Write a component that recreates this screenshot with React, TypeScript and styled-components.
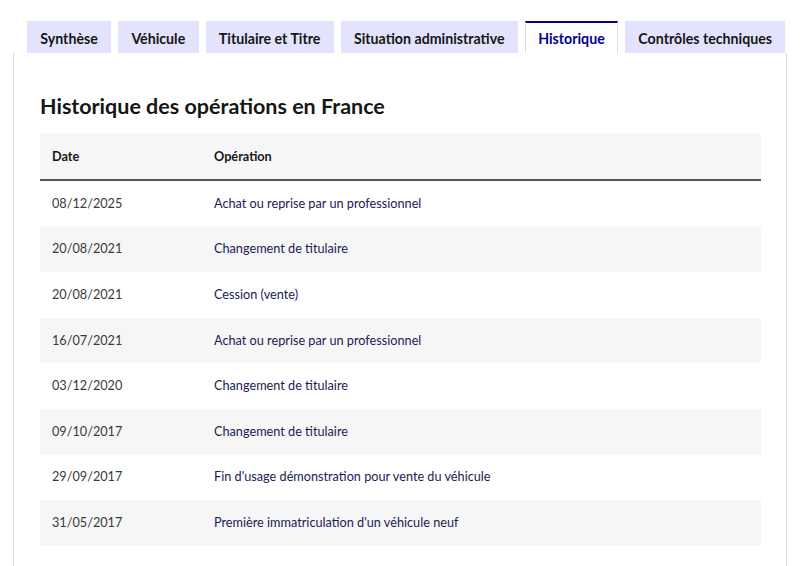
import styled, { createGlobalStyle } from "styled-components";

const GlobalStyle = createGlobalStyle`
  body {
    margin: 0;
    background: #ffffff;
    font-family: Lato, "Noto Sans", sans-serif;
    color: #161616;
  }
`;

const Page = styled.div`
  padding: 21px 13px 0 13px;
  width: 800px;
  box-sizing: border-box;
`;

const TabList = styled.div`
  display: flex;
  gap: 7px;
  padding-left: 14px;
  height: 32px;
`;

const Tab = styled.div<{ $active?: boolean }>`
  display: flex;
  align-items: center;
  padding: 0 12.3px;
  font-size: 14.2px;
  font-weight: 700;
  white-space: nowrap;
  box-sizing: border-box;
  color: ${(p) => (p.$active ? "#000091" : "#161616")};
  background: ${(p) => (p.$active ? "#ffffff" : "#e3e3fd")};
  border-top: 2px solid ${(p) => (p.$active ? "#000091" : "transparent")};
  border-left: 1px solid ${(p) => (p.$active ? "#dddddd" : "transparent")};
  border-right: 1px solid ${(p) => (p.$active ? "#dddddd" : "transparent")};
`;

const Panel = styled.div`
  border-left: 1px solid #dddddd;
  border-right: 1px solid #dddddd;
  padding: 38px 25px 40px 26px;
  width: 774px;
  box-sizing: border-box;
`;

const Title = styled.h2`
  margin: 0 0 12px 0;
  font-size: 21.5px;
  line-height: 30px;
  font-weight: 700;
  color: #161616;
`;

const Table = styled.div`
  display: flex;
  flex-direction: column;
  width: 721px;
`;

const Row = styled.div<{ $shade?: boolean; $head?: boolean }>`
  display: grid;
  grid-template-columns: 162px 1fr;
  height: ${(p) => (p.$head ? "46px" : "45.6px")};
  align-items: center;
  background: ${(p) => (p.$shade ? "#f6f6f6" : "#ffffff")};
  border-bottom: ${(p) => (p.$head ? "2px solid #555555" : "none")};
  font-size: 12.7px;
  font-weight: ${(p) => (p.$head ? 700 : 400)};
`;

const Cell = styled.div<{ $op?: boolean }>`
  padding-left: 12px;
  margin-top: -2px;
  color: ${(p) => (p.$op ? "#1b1b55" : "#3a3a3a")};
`;

const HeadCell = styled.div`
  padding-left: 12px;
  color: #161616;
`;

const tabs = [
  "Synthèse",
  "Véhicule",
  "Titulaire et Titre",
  "Situation administrative",
  "Historique",
  "Contrôles techniques",
];

const rows = [
  ["08/12/2025", "Achat ou reprise par un professionnel"],
  ["20/08/2021", "Changement de titulaire"],
  ["20/08/2021", "Cession (vente)"],
  ["16/07/2021", "Achat ou reprise par un professionnel"],
  ["03/12/2020", "Changement de titulaire"],
  ["09/10/2017", "Changement de titulaire"],
  ["29/09/2017", "Fin d'usage démonstration pour vente du véhicule"],
  ["31/05/2017", "Première immatriculation d'un véhicule neuf"],
];

export default function App() {
  return (
    <Page>
      <GlobalStyle />
      <TabList>
        {tabs.map((t) => (
          <Tab key={t} $active={t === "Historique"}>
            {t}
          </Tab>
        ))}
      </TabList>
      <Panel>
        <Title>Historique des opérations en France</Title>
        <Table>
          <Row $head $shade>
            <HeadCell>Date</HeadCell>
            <HeadCell>Opération</HeadCell>
          </Row>
          {rows.map(([d, op], i) => (
            <Row key={i} $shade={i % 2 === 1}>
              <Cell>{d}</Cell>
              <Cell $op>{op}</Cell>
            </Row>
          ))}
        </Table>
      </Panel>
    </Page>
  );
}
